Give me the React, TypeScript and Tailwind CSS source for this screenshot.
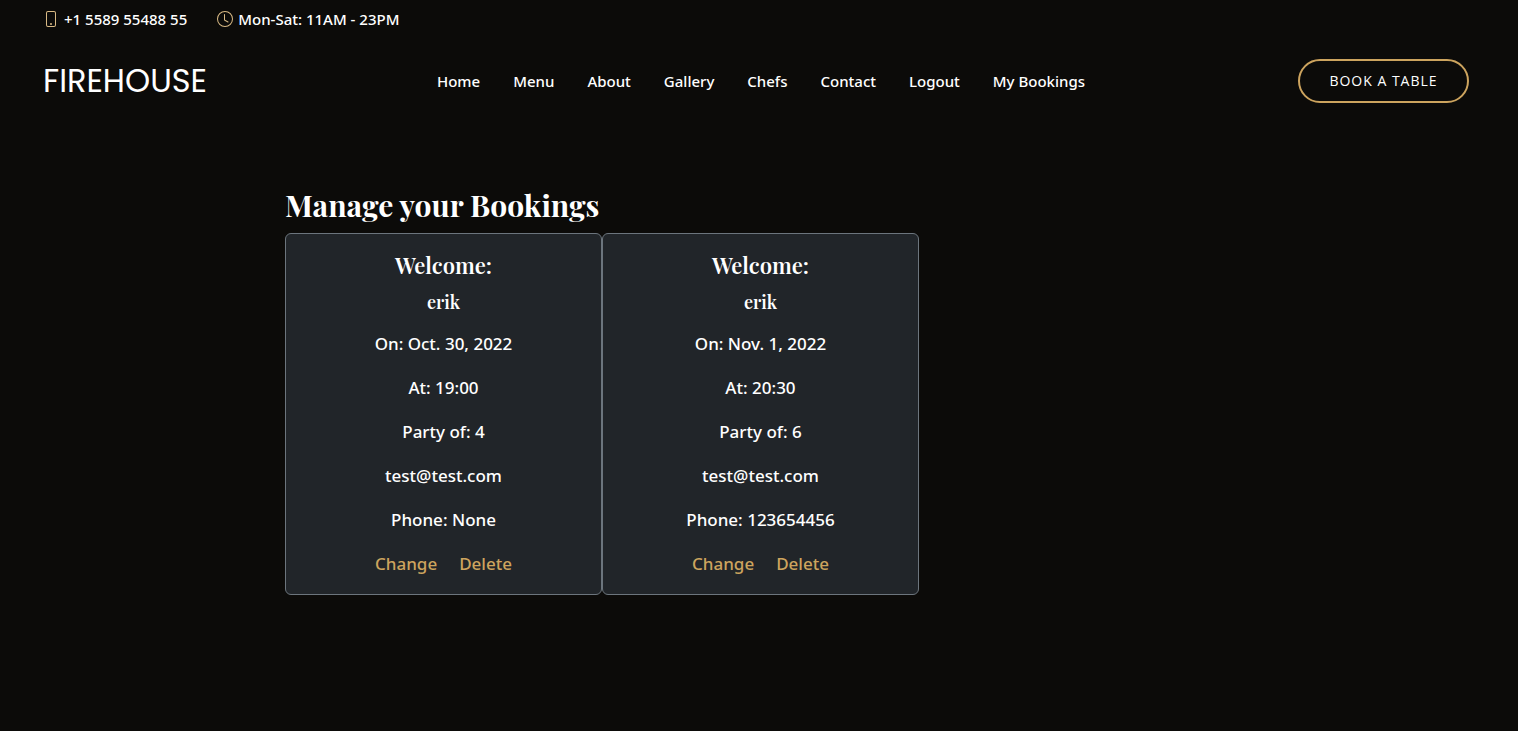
import { BsClock, BsPhone } from "react-icons/bs";

const navItems = ["Home", "Menu", "About", "Gallery", "Chefs", "Contact", "Logout", "My Bookings"];

const bookings = [
  { name: "erik", date: "Oct. 30, 2022", time: "19:00", party: 4, email: "test@test.com", phone: "None" },
  { name: "erik", date: "Nov. 1, 2022", time: "20:30", party: 6, email: "test@test.com", phone: "123654456" },
];

type Booking = (typeof bookings)[number];

function BookingCard({ booking }: { booking: Booking }) {
  return (
    <article className="flex w-1/3 flex-col items-center rounded-md border border-[#6c757d] bg-[#212529] px-4 pt-[15px] pb-4 text-center font-['Noto_Sans',sans-serif] text-[17px] leading-7 font-medium">
      <h2 className="mb-[9px] font-['Playfair_Display','Liberation_Serif',serif] text-[22px] leading-8 font-semibold">Welcome:</h2>
      <h3 className="mb-4 font-['Playfair_Display','Liberation_Serif',serif] text-[18px] leading-6 font-semibold">{booking.name}</h3>
      <div className="flex flex-col gap-4">
        <p>On: {booking.date}</p>
        <p>At: {booking.time}</p>
        <p>Party of: {booking.party}</p>
        <p>{booking.email}</p>
        <p>Phone: {booking.phone}</p>
        <div className="flex justify-center gap-[22px] text-[#cda45e]">
          <a href="#change">Change</a>
          <a href="#delete">Delete</a>
        </div>
      </div>
    </article>
  );
}

export default function App() {
  return (
    <div className="min-h-screen bg-[#0c0b09] font-['Open_Sans',sans-serif] text-white">
      <header>
        <div className="flex h-[38px] items-center gap-[30px] px-[43px] font-['Noto_Sans',sans-serif] text-[15px] font-medium">
          <span className="flex items-center gap-[5px]"><BsPhone className="text-[16px] text-[#d9ba85]" />+1 5589 55488 55</span>
          <span className="flex items-center gap-[5px]"><BsClock className="text-[16px] text-[#d9ba85]" />Mon-Sat: 11AM - 23PM</span>
        </div>
        <div className="flex items-center justify-between pt-[21px] pr-[49px] pl-[43px]">
          <a href="#home" className="w-[181px] font-['Poppins',Lato,sans-serif] text-[32px] leading-[44px]">FIREHOUSE</a>
          <nav className="flex gap-[33px] font-['Noto_Sans',sans-serif] text-[15px] font-medium">
            {navItems.map((item) => <a key={item} href="#nav">{item}</a>)}
          </nav>
          <a href="#book" className="flex h-11 w-[171px] items-center justify-center rounded-full border-2 border-[#cda45e] pb-px text-[14px] font-medium tracking-[1px]">BOOK A TABLE</a>
        </div>
      </header>
      <main className="mx-auto w-full max-w-[954px] pt-[82px] pl-[3px]">
        <h1 className="mb-2 font-['Playfair_Display','Liberation_Serif',serif] text-[30px] leading-10 font-bold">Manage your Bookings</h1>
        <div className="flex">
          {bookings.map((booking) => <BookingCard key={booking.date} booking={booking} />)}
        </div>
      </main>
    </div>
  );
}
